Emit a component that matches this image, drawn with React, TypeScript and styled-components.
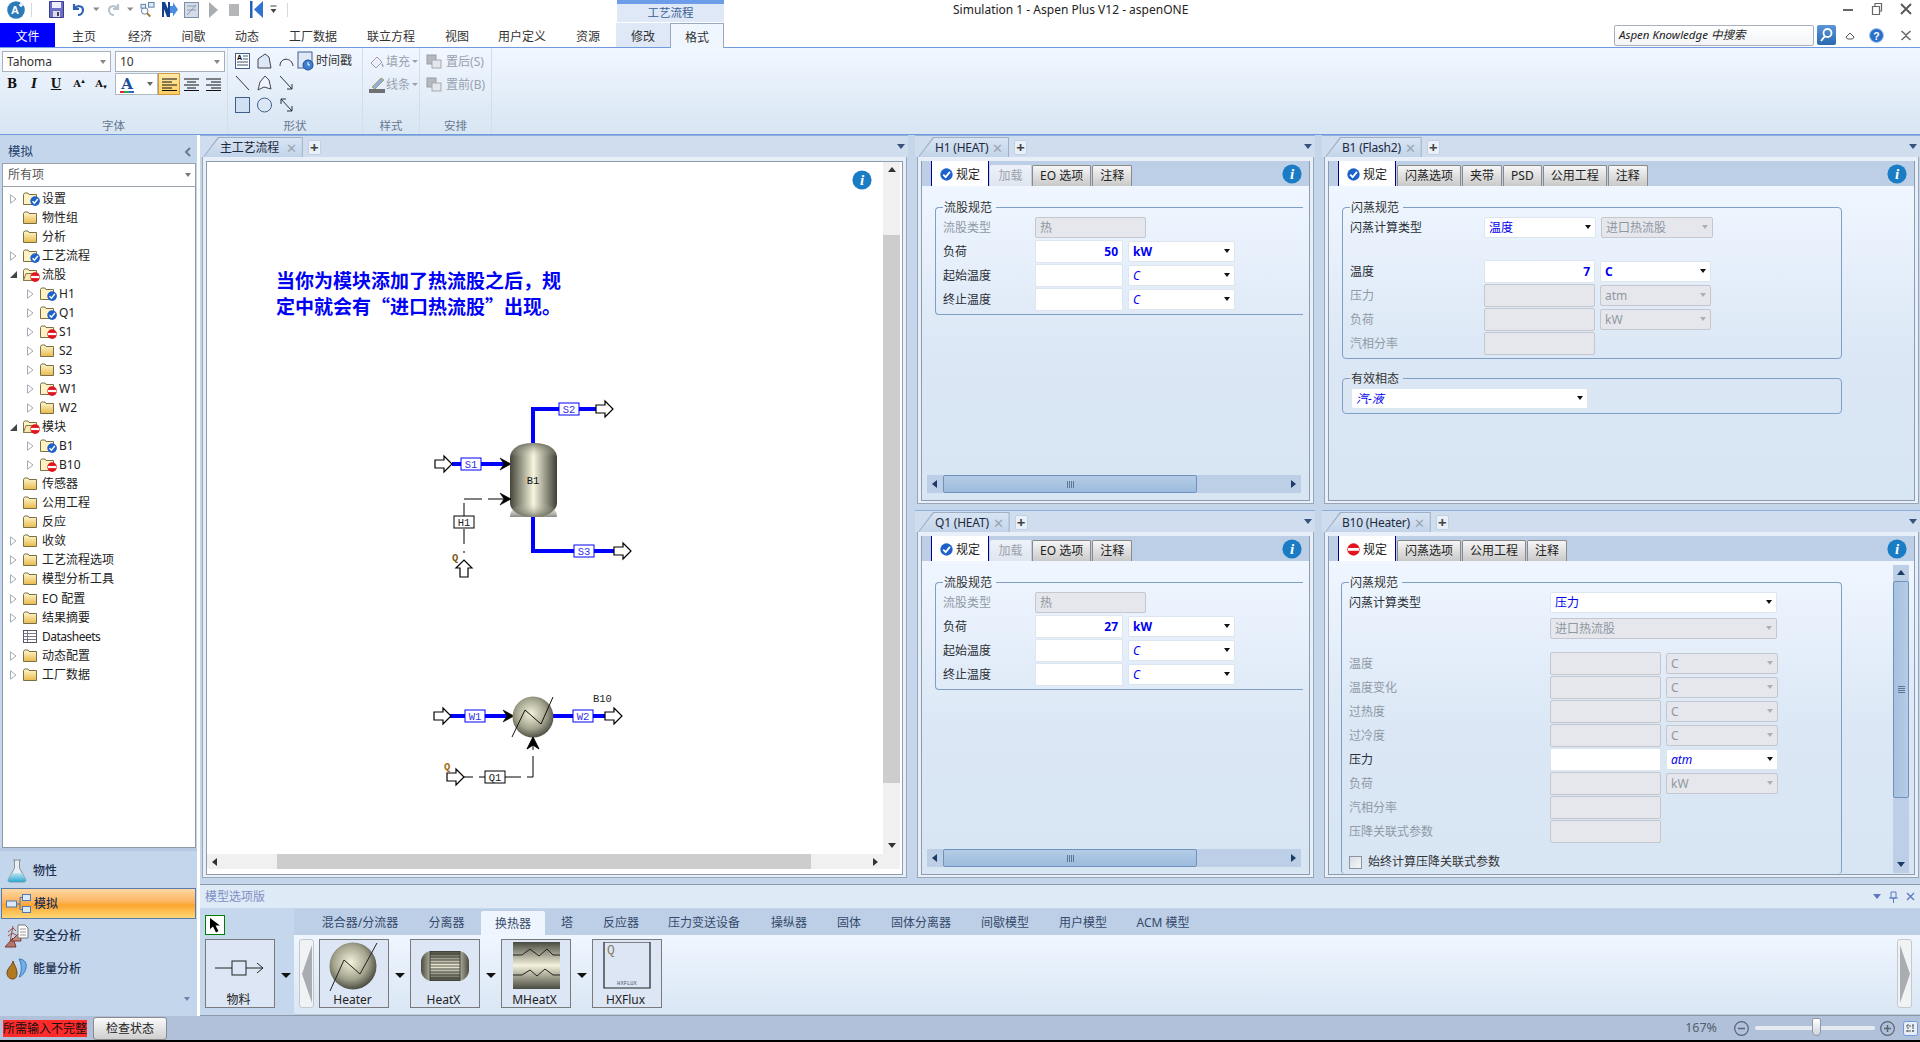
import React from 'react';
import styled, { createGlobalStyle } from 'styled-components';

const Global = createGlobalStyle`
  html, body { margin: 0; padding: 0; background: #000; }
  * { box-sizing: border-box; }
  body { font-family: "Noto Sans", "Noto Sans CJK SC", sans-serif; font-size: 12px; line-height: 16px; color: #1d2a3a; }
`;

const App_ = styled.div`width: 1920px; height: 1042px; display: flex; flex-direction: column; overflow: hidden; background: #000;`;

/* ---------- title bar ---------- */
const TitleBar = styled.div`height: 23px; background: #fff; display: flex; flex: none;`;
const Quick = styled.div`width: 617px; display: flex; align-items: center; position: relative; padding-bottom: 4px;`;
const QuickCell = styled.div<{ $w: number }>`width: ${p => p.$w}px; flex: none; display: flex; justify-content: center; align-items: center;`;
const Sep = styled.div`width: 1px; height: 14px; background: #d8d8d8;`;
const CtxTab = styled.div`width: 107px; height: 22px; background: #dfe8f7; border-top: 4px solid #6d9de8; text-align: center; line-height: 18px; color: #3a5f96; font-size: 11.5px;`;
const WinTitle = styled.div`padding-left: 229px; line-height: 19px; color: #222; font-size: 12px; white-space: nowrap;`;
const WinBtns = styled.div`margin-left: auto; display: flex; align-items: flex-start; padding-top: 2px;`;
const WinBtn = styled.div`width: 29px; display: flex; justify-content: center;`;

/* ---------- ribbon tabs ---------- */
const TabRow = styled.div`height: 24px; background: #fff; display: flex; flex: none; position: relative;`;
const RTab = styled.div<{ $w: number; $kind?: string }>`
  width: ${p => p.$w}px; height: ${p => p.$kind === 'on' ? 25 : 24}px; text-align: center; line-height: 27px; color: ${p => p.$kind === 'file' ? '#fff' : '#333'};
  font-size: 12px; z-index: 1;
  background: ${p => p.$kind === 'file' ? '#0000ff' : p.$kind === 'ctx' ? '#dfe8f7' : p.$kind === 'on' ? '#f0f6fe' : 'transparent'};
  border: ${p => p.$kind === 'on' ? '1px solid #98a8c0' : 'none'};
  border-bottom: none;
`;
const SearchWrap = styled.div`position: absolute; right: 0; top: 0; display: flex; align-items: center; height: 23px; padding-top: 1px;`;
const SearchBox = styled.div`width: 200px; height: 21px; border: 1px solid #a8b0bc; border-radius: 2px; font-style: italic; color: #222; padding-left: 4px; line-height: 18px; font-size: 11.5px; background: linear-gradient(#fff, #f2f4f7);`;
const SearchBtn = styled.div`width: 19px; height: 20px; margin-left: 3px; background: linear-gradient(#5a96d8, #2a68b0); border-radius: 2px; display: flex; justify-content: center; align-items: center;`;
const SearchIcon = styled.div<{ $w: number }>`width: ${p => p.$w}px; flex: none; display: flex; justify-content: center;`;

/* ---------- ribbon ---------- */
const Ribbon = styled.div`height: 88px; flex: none; display: flex; background: linear-gradient(#f1f7ff, #d8e5f3); border-top: 1px solid #6f9ade; border-bottom: 1px solid #6f9ade;`;
const RGroup = styled.div<{ $w: number; $pt?: number }>`width: ${p => p.$w}px; position: relative; border-right: 1px solid #d2deec; padding-top: ${p => p.$pt ?? 3}px;`;
const RLabel = styled.div`position: absolute; left: 0; right: 0; bottom: 1px; text-align: center; color: #66788f; font-size: 11.5px; line-height: 14px;`;
const FontRow = styled.div`display: flex; padding-left: 2px; gap: 4px; height: 22px;`;
const RSelect = styled.div<{ $w: number }>`width: ${p => p.$w}px; height: 21px; background: #fff; border: 1px solid #aab0b8; padding-left: 4px; line-height: 19px; position: relative; color: #333; font-size: 12px;`;
const Caret = styled.i<{ $c?: string }>`position: absolute; right: 4px; top: 50%; margin-top: -2px; border: 3.5px solid transparent; border-top: 4px solid ${p => p.$c || '#555'}; border-bottom: none;`;
const FmtRow = styled.div`display: flex; height: 22px; align-items: center;`;
const FmtBtn = styled.div<{ $w: number; $on?: boolean }>`
  width: ${p => p.$w}px; height: 22px; flex: none; display: flex; justify-content: center; align-items: center; font-family: "DejaVu Serif", serif; font-weight: bold; color: #111; font-size: 12px;
  ${p => p.$on ? 'background: linear-gradient(#ffe9a8,#ffcf60); border: 1px solid #d29a3c;' : ''}
`;
const Raise = styled.span<{ $low?: boolean }>`font-size: 7px; margin-top: ${p => p.$low ? 6 : -6}px;`;
const SmallA = styled.span`font-size: 10px;`;
const ColorBtn = styled.div`width: 43px; height: 22px; flex: none; background: #fff; border: 1px solid #b0b8c2; position: relative; display: flex; align-items: center; padding-left: 1px; margin-left: 3px;`;
const ShapeGrid = styled.div`display: grid; grid-template-columns: repeat(3, 22px) auto; grid-auto-rows: 22px; padding: 0 0 0 3px; align-items: center; justify-items: center;`;
const Stamp = styled.div`display: flex; align-items: center; gap: 2px; color: #333; font-size: 12px; white-space: nowrap; justify-self: start;`;
const OffLine = styled.div`display: flex; align-items: center; height: 23px; color: #98a2ae; font-size: 12px; padding-left: 6px; gap: 1px; white-space: nowrap;`;
const TinyCaret = styled.i`border: 3px solid transparent; border-top: 3px solid #98a2ae; border-bottom: none; margin-left: 1px;`;

/* ---------- main ---------- */
const Main = styled.div`height: 881px; flex: none; display: flex; background: #c5d6ea;`;
const LeftCol = styled.div`width: 200px; flex: none; border-right: 3px solid #fff; display: flex; flex-direction: column; background: #c4d6ec;`;
const LeftHead = styled.div`height: 28px; display: flex; align-items: center; justify-content: space-between; padding: 5px 5px 0 8px; color: #1f3d68; font-size: 12.5px;`;
const FilterSel = styled.div`margin: 0 1px 0 2px; height: 24px; border: 1px solid #9aa3ad; background: #fff; padding-left: 5px; line-height: 21px; position: relative; color: #555;`;
const Tree = styled.div`height: 661px; margin: 0 1px 0 2px; border: 1px solid #8e99a6; border-top: none; background: #fff; padding-top: 2px;`;
const TreeRow = styled.div<{ $lv: number }>`height: 19.05px; display: flex; align-items: center; padding-left: ${p => 3 + p.$lv * 17}px; color: #222; font-size: 12px; white-space: nowrap;`;
const ExpCell = styled.div`width: 14px; flex: none; display: flex; justify-content: center;`;
const TreeIcon = styled.div`width: 22px; padding-left: 3px; flex: none; display: flex; align-items: center;`;
const LatinName = styled.span`letter-spacing: -0.5px;`;
const NavArea = styled.div`flex: 1; padding-top: 3px; position: relative; border-top: 3px solid #b6c9e2;`;
const NavItem = styled.div<{ $on?: boolean }>`
  height: ${p => p.$on ? 31 : 33}px; margin: ${p => p.$on ? 1 : 0}px 1px 0; display: flex; align-items: center; padding-left: 3px; gap: 3px; color: #1d3050; font-size: 12px; font-weight: 500;
  ${p => p.$on ? 'background: linear-gradient(#fdd9a6 0%, #fdb35c 45%, #fda52e 55%, #ffd878 100%); border: 1px solid #5a7aa8;' : ''}
`;
const NavIcon = styled.div`width: 26px; display: flex; justify-content: center;`;
const NavMore = styled.i`position: absolute; right: 7px; bottom: 15px; border: 3.5px solid transparent; border-top: 4px solid #6b86ad; border-bottom: none;`;

const RightCol = styled.div`flex: 1; min-width: 0; display: flex; flex-direction: column;`;
const Workspace = styled.div`height: 749px; flex: none; display: grid; grid-template-columns: 708px 400px 598px; column-gap: 7px; grid-template-rows: 369px 368px; row-gap: 6px; background: #c5d6ea;`;
const DocCell = styled.div`grid-row: 1 / span 2; display: flex; flex-direction: column; min-height: 0;`;
const PanelCell = styled.div`display: flex; flex-direction: column; min-height: 0;`;

const Strip = styled.div`height: 22px; flex: none; display: flex; background: #cfddef; padding-left: 3px; align-items: flex-end; border-top: 1px solid #8fb0de; position: relative; z-index: 1; margin-bottom: -1px;`;
const DocTab = styled.div<{ $gap?: number }>`position: relative; height: 20px; display: flex; align-items: center; padding: 2px 6px 0 17px; gap: ${p => p.$gap ?? 4}px; color: #1c2a3c; font-size: 12px; letter-spacing: -0.2px; white-space: nowrap; z-index: 0;
  &::before, &::after { content: ''; position: absolute; inset: 0; z-index: -1; clip-path: polygon(0 100%, 15px 0, 100% 0, 100% 100%); }
  &::before { background: #9fb0c4; }
  &::after { inset: 1px 1px 0 1px; background: linear-gradient(#d8e4f3, #c3d4ea); }
`;
const Close = styled.span`color: #9aa5b2; font-size: 13px; line-height: 14px;`;
const Plus = styled.div`width: 13px; height: 15px; margin: 0 0 2px 5px; background: #e8f0fa; border: 1px solid #c3d0e0; border-radius: 2px; color: #444; line-height: 12px; text-align: center; font-size: 15px; font-weight: bold;`;
const StripCaret = styled.i`position: absolute; right: 3px; top: 8px; border: 4px solid transparent; border-top: 5px solid #35527d; border-bottom: none;`;
const Frame = styled.div`flex: 1; min-height: 0; margin: 0 1px 0 2px; border: 1px solid #97a6b8; background: #e8eff8; padding: 4px 3px 2px 3px; display: flex; flex-direction: column;`;
const Inner = styled.div`flex: 1; min-height: 0; border: 1px solid #8d9caf; border-top: none; display: flex; flex-direction: column; overflow: hidden; position: relative;`;
const SubTabs = styled.div`height: 25px; flex: none; background: #bccfe6; display: flex; align-items: flex-end; padding-left: 9px; gap: 1px; position: relative;`;
const SubTab = styled.div<{ $kind?: string }>`
  padding: 0 7px; display: flex; align-items: center; justify-content: center; gap: 3px; white-space: nowrap; font-size: 12px;
  ${p => p.$kind === 'on' ? 'height: 25px; padding-top: 2px; background: #fff; border-left: 1px solid #00008b; border-right: 1px solid #00008b; color: #222; min-width: 58px;'
    : p.$kind === 'off' ? 'height: 21px; background: linear-gradient(#eef2f8,#dfe6ef); color: #9aa3ad; min-width: 41px; border-top-left-radius: 2px;'
    : 'height: 21px; background: linear-gradient(#f6f6f6,#c9c9c9); border: 1px solid #8a8a8a; border-bottom: none; border-radius: 2px 2px 0 0; color: #222;'}
`;
const InfoSpot = styled.div`position: absolute; right: 7px; top: 3px;`;
const Content = styled.div`flex: 1; min-height: 0; background: linear-gradient(#eff6ff, #dbe7f5 55%, #d8e5f3); display: flex; overflow: hidden;`;
const FormCol = styled.div`flex: 1; min-width: 0; display: flex; flex-direction: column;`;
const Box = styled.fieldset<{ $w: number; $m: number; $t: number; $open?: boolean; $noBottom?: boolean }>`
  width: ${p => p.$w}px; margin: ${p => p.$t}px 0 0 ${p => p.$m}px; padding: 0 0 3px 7px; min-width: 0; flex: none;
  border: 1px solid #7f9fc6; border-radius: 4px;
  ${p => p.$open ? 'border-right: none; border-top-right-radius: 0; border-bottom-right-radius: 0;' : ''}
  ${p => p.$noBottom ? 'border-bottom: none; padding-bottom: 0;' : ''}
`;
const Legend = styled.legend`padding: 1px 4px 0 1px; margin-left: 0; line-height: 15px; color: #333; font-size: 12px;`;
const Row = styled.div<{ $mt?: number }>`height: 24px; display: flex; align-items: center; margin-top: ${p => p.$mt || 0}px;`;
const Label = styled.div<{ $w: number; $off?: boolean }>`width: ${p => p.$w}px; flex: none; padding-top: 2px; color: ${p => p.$off ? '#909aa5' : '#2a2f36'}; white-space: nowrap; font-size: 12px;`;
const Inp = styled.div<{ $w: number; $off?: boolean; $h?: number }>`
  width: ${p => p.$w}px; height: ${p => p.$h || 23}px; flex: none; text-align: right; padding-right: 4px; line-height: 22px;
  font-weight: bold; color: #0000f0; font-size: 12px;
  background: ${p => p.$off ? '#e6e7ec' : '#fff'}; border: 1px solid ${p => p.$off ? '#c4c8ce' : '#dde5ef'}; border-radius: 2px;
`;
const Sel = styled.div<{ $w: number; $off?: boolean; $ml?: number; $style?: string; $h?: number }>`
  width: ${p => p.$w}px; height: ${p => p.$h || 21}px; flex: none; margin-left: ${p => p.$ml ?? 5}px; padding-left: 4px; line-height: 20px; position: relative; font-size: 12px; white-space: nowrap;
  color: ${p => p.$off ? '#8e97a2' : '#0000f0'}; font-weight: ${p => p.$style === 'bold' ? 'bold' : 'normal'}; font-style: ${p => p.$style === 'italic' ? 'italic' : 'normal'};
  background: ${p => p.$off ? '#e6e7ec' : '#fff'}; border: 1px solid ${p => p.$off ? '#c4c8ce' : '#dde5ef'}; border-radius: 2px;
`;
const HScroll = styled.div`height: 18px; flex: none; margin: auto 8px 7px 5px; display: flex; align-items: center; background: #bccfe6;`;
const ScrollEnd = styled.div`width: 16px; flex: none; display: flex; justify-content: center; align-items: center;`;
const HTrack = styled.div`flex: 1; height: 100%; display: flex;`;
const HThumb = styled.div`width: 254px; height: 100%; background: linear-gradient(#b4cce6, #9dbbdd); border: 1px solid #6f92bd; border-radius: 2px; display: flex; justify-content: center; align-items: center;`;
const Grip = styled.div`width: 7px; height: 7px; background: repeating-linear-gradient(90deg, #5c7696 0 1px, transparent 1px 2px);`;
const VScroll = styled.div`width: 16px; flex: none; margin: 4px 5px 1px 0; background: #bccfe6; display: flex; flex-direction: column;`;
const VThumb = styled.div`height: 217px; background: linear-gradient(90deg, #a6c1e0, #b7cce6); border: 1px solid #6f92bd; border-radius: 2px; display: flex; justify-content: center; align-items: center;`;
const VGrip = styled.div`width: 7px; height: 7px; background: repeating-linear-gradient(0deg, #5c7696 0 1px, transparent 1px 2px);`;
const CheckRow = styled.div`display: flex; align-items: center; gap: 6px; margin-top: 7px; height: 24px; color: #333; white-space: nowrap;`;
const CheckBox = styled.div`width: 13px; height: 13px; border: 1px solid #8a94a0; background: linear-gradient(135deg, #d8dde3, #f6f7f8);`;

/* ---------- document canvas ---------- */
const CanvasGrid = styled.div`flex: 1; min-height: 0; display: grid; grid-template-columns: 676px 17px; grid-template-rows: 692px 15px; background: #fff; border: 1px solid #8d9caf;`;
const Viewport = styled.div`position: relative; overflow: hidden; background: #fff;`;
const FlowSvg = styled.svg`position: absolute; inset: 0; display: block;`;
const Note = styled.div`position: absolute; left: 69px; top: 105px; width: 320px; font-family: "Noto Sans CJK SC", sans-serif; font-size: 19px; line-height: 26px; font-weight: bold; color: #0000f5; white-space: nowrap;`;
const NoteLine = styled.div``;
const DocInfo = styled.div`position: absolute; left: 645px; top: 8px;`;
const CV = styled.div`background: #f0f0f0; display: flex; flex-direction: column; align-items: stretch;`;
const CH = styled.div`background: #f0f0f0; display: flex; align-items: stretch;`;
const CArrow = styled.div<{ $end?: boolean }>`height: 16px; display: flex; justify-content: center; align-items: center; flex: none; ${p => p.$end ? 'margin-top: auto;' : ''}`;
const CArrowH = styled.div<{ $end?: boolean }>`width: 16px; display: flex; justify-content: center; align-items: center; flex: none; ${p => p.$end ? 'margin-left: auto;' : ''}`;
const CThumbV = styled.div`height: 548px; margin-top: 57px; background: #cdcdcd;`;
const CThumbH = styled.div`width: 534px; margin-left: 54px; background: #cdcdcd;`;
const CCorner = styled.div`background: #f0f0f0;`;

/* ---------- palette ---------- */
const Palette = styled.div`flex: 1; min-height: 0; display: flex; flex-direction: column; border-top: 1px solid #8c98a8; border-bottom: 1px solid #8c98a8; background: #c5d7ec;`;
const PalHead = styled.div`height: 23px; flex: none; background: #deeaf6; padding-left: 5px; line-height: 22px; color: #7f8fc4; font-size: 12px; display: flex; align-items: center;`;
const PalTools = styled.div`margin-left: auto; display: flex; align-items: center; gap: 8px; padding-right: 5px;`;
const PalBody = styled.div`flex: 1; display: flex; min-height: 0;`;
const PalLeft = styled.div`width: 94px; flex: none; padding: 7px 0 0 5px;`;
const Cursor = styled.div`width: 20px; height: 20px; border: 1px solid #008000; background: #fff; display: flex; justify-content: center; align-items: center;`;
const PalLeftRow = styled.div`display: flex; align-items: center; margin-top: 4px;`;
const PalRight = styled.div`flex: 1; min-width: 0; display: flex; flex-direction: column; padding-top: 1px;`;
const PalTabs = styled.div`height: 26px; flex: none; background: #bccfe6; display: flex; align-items: flex-end; padding-left: 14px;`;
const PalTab = styled.div<{ $w: number; $on?: boolean }>`width: ${p => p.$w}px; flex: none; text-align: center; height: ${p => p.$on ? 24 : 26}px; line-height: ${p => p.$on ? 26 : 28}px; color: #36496a; font-size: 12px; white-space: nowrap; ${p => p.$on ? 'background: #eef5fe; border-radius: 2px 2px 0 0;' : ''}`;
const PalContent = styled.div`flex: 1; display: flex; align-items: flex-start; padding: 4px 8px 0 5px; background: linear-gradient(#eff6ff, #d9e6f4); border-bottom: 1px solid #bccbdc;`;
const Scroller = styled.div`width: 15px; height: 69px; flex: none; background: #f1f2f4; border: 1px solid #c2c8d0; border-radius: 3px; display: flex; align-items: center; justify-content: center;`;
const ModelBtn = styled.div`width: 70px; height: 69px; flex: none; border: 1px solid #7a7a7a; background: #dde6f5; display: flex; flex-direction: column; align-items: center; justify-content: space-between; color: #222; font-size: 12px; line-height: 15px; padding: 2px 3px 0 0;`;
const ModelIcon = styled.div<{ $t?: number }>`display: flex; height: 50px; padding-top: ${p => p.$t || 0}px; padding-left: 3px;`;
const ModelWrap = styled.div`display: flex; align-items: center; height: 69px;`;
const DropCell = styled.div`width: 21px; display: flex; justify-content: center; flex: none;`;
const DropTri = styled.i`border: 5px solid transparent; border-top: 5px solid #111; border-bottom: none; margin-top: 3px;`;
const ScrollRightSpot = styled.div`margin-left: auto;`;

/* ---------- status ---------- */
const Status = styled.div`height: 24px; flex: none; background: #b0c1d9; display: flex; align-items: center; padding-left: 3px;`;
const Alarm = styled.div`width: 84px; height: 17px; background: #ff2a2a; color: #111; line-height: 17px; text-align: center; font-size: 12px; white-space: nowrap;`;
const StatusBtn = styled.div`width: 74px; height: 23px; margin-left: 6px; background: linear-gradient(#fafafa, #cfcfcf); border: 1px solid #8a8a8a; border-radius: 3px; text-align: center; line-height: 21px; color: #222; font-size: 12px;`;
const Zoomer = styled.div`margin-left: auto; display: flex; align-items: center; color: #55606e; font-size: 12.5px; padding-right: 2px;`;
const Slider = styled.div`width: 120px; height: 4px; margin: 0 5px 0 6px; background: #e6ebf2; border-radius: 2px; position: relative;`;
const Thumb = styled.div`position: absolute; left: 57px; top: -8px; width: 9px; height: 18px; background: linear-gradient(#fff, #cfd5dd); border: 1px solid #8e98a6; border-radius: 2px 2px 4px 4px;`;
const ZoomIco = styled.div<{ $ml?: number }>`margin-left: ${p => p.$ml || 0}px; display: flex;`;
const Black = styled.div`flex: 1;`;

/* ---------- icons ---------- */
const CheckBadge = ({ s = 13 }: { s?: number }) => (
  <svg width={s} height={s} viewBox="0 0 12 12"><circle cx="6" cy="6" r="5.7" fill="#1d62c8" /><path d="M3 6.2 5.2 8.4 9.2 3.6" stroke="#fff" strokeWidth="1.7" fill="none" /></svg>
);
const StopBadge = ({ s = 13 }: { s?: number }) => (
  <svg width={s} height={s} viewBox="0 0 12 12"><circle cx="6" cy="6" r="5.7" fill="#e0141c" /><rect x="1" y="4.6" width="10" height="2.6" fill="#fff" /></svg>
);
const Info = () => (
  <svg width="20" height="20" viewBox="0 0 20 20"><circle cx="10" cy="10" r="9.6" fill="#1a7cc4" /><text x="10" y="15" textAnchor="middle" fontFamily="Liberation Serif, serif" fontStyle="italic" fontWeight="bold" fontSize="15" fill="#fff">i</text></svg>
);
const Folder = ({ st, open }: { st?: string; open?: boolean }) => (
  <svg width="17" height="14" viewBox="0 0 17 14">
    <defs><linearGradient id="fg" x1="0" y1="0" x2="0" y2="1"><stop offset="0" stopColor="#fff8d0" /><stop offset="1" stopColor="#e9b94c" /></linearGradient></defs>
    <path d="M.5 2.500 1.500 1H5L6 2.500h7.500V12.500H.5Z" fill={st ? '#fff3c4' : 'url(#fg)'} stroke="#7a7048" />
    {open && <path d="M.5 12.500 3 5.500H15L13 12.500Z" fill="#fbe9ac" stroke="#8a7a4a" />}
    {st === 'ok' && <g transform="translate(7 4) scale(.85)"><circle cx="6" cy="6" r="5.7" fill="#1d62c8" /><path d="M3 6.200 5.200 8.400 9.200 3.600" stroke="#fff" strokeWidth="1.700" fill="none" /></g>}
    {st === 'err' && <g transform="translate(7 4) scale(.85)"><circle cx="6" cy="6" r="5.700" fill="#e0141c" /><rect x="1" y="4.600" width="10" height="2.600" fill="#fff" /></g>}
  </svg>
);
const ExpClosed = () => <svg width="7" height="10" viewBox="0 0 7 10"><path d="M.5.8 6 5 .5 9.200Z" fill="#fff" stroke="#a4acb5" /></svg>;
const ExpOpen = () => <svg width="9" height="9" viewBox="0 0 9 9"><path d="M8 1V8H1Z" fill="#444" /></svg>;
const Sheet = () => <svg width="14" height="13" viewBox="0 0 14 13"><rect x=".5" y=".5" width="13" height="12" fill="#fff" stroke="#556" /><path d="M.5 3.500H13.500M.5 6.500H13.500M.5 9.500H13.500M4.500.5V12.500" stroke="#778" /></svg>;
const Tri = ({ d, c = '#333' }: { d: 'u' | 'd' | 'l' | 'r'; c?: string }) => {
  const p = { u: 'M0 6 4 1 8 6Z', d: 'M0 1H8L4 6Z', l: 'M6 0V8L1 4Z', r: 'M2 0V8L7 4Z' }[d];
  return <svg width="8" height="8" viewBox="0 0 8 8"><path d={p} fill={c} /></svg>;
};

const SaveIco = () => <svg width="15" height="17" viewBox="0 0 15 17"><path d="M.5.5H14.500V16.500H.5Z" fill="#6f6fc4" stroke="#3a3a90" /><rect x="3" y="1" width="9" height="6" fill="#eef" /><rect x="4" y="10" width="7" height="6" fill="#dde" /><rect x="8" y="11" width="2" height="4" fill="#446" /></svg>;
const UndoIco = ({ off }: { off?: boolean }) => <svg width="13" height="15" viewBox="0 0 13 15"><g transform={off ? 'translate(13 0) scale(-1 1)' : undefined}><path d="M2 2V7H7M2.500 6.500C5 3 11 3.500 11 8 11 11 8.500 13 6 13" fill="none" stroke={off ? '#b8c2cc' : '#2e62b4'} strokeWidth="2.200" /></g></svg>;
const Drop = () => <svg width="7" height="5" viewBox="0 0 7 5"><path d="M0 .5H6.500L3.200 4Z" fill="#8a8a8a" /></svg>;
const ToolsIco = () => <svg width="16" height="17" viewBox="0 0 16 17"><circle cx="5" cy="10" r="3.500" fill="#fff" stroke="#5a7ca8" /><path d="M7.500 12.500 11 16" stroke="#a07a30" strokeWidth="2" /><rect x="9" y="1" width="6" height="5" fill="#dbe8f8" stroke="#5a7ca8" /><rect x="1" y="3" width="5" height="4" fill="#dbe8f8" stroke="#5a7ca8" /></svg>;
const RunN = () => <svg width="17" height="17" viewBox="0 0 17 17"><path d="M1 1H4L7 8V1H9V16H6L3 8V16H1Z" fill="#14408e" /><path d="M9 5H12V1.500L17 8.500 12 15.500V12H9Z" fill="#4a8ee0" /></svg>;
const GridIco = () => <svg width="15" height="16" viewBox="0 0 15 16"><rect x=".5" y=".5" width="14" height="15" fill="#d4dce8" stroke="#7f8ea8" /><path d="M3 13 12 3M3 4H12M3 8H12" stroke="#8a9ab4" /></svg>;
const PlayIco = () => <svg width="9" height="16" viewBox="0 0 9 16"><path d="M0 0 9 8 0 16Z" fill="#a9adb2" /></svg>;
const StopIco = () => <svg width="10" height="12" viewBox="0 0 10 12"><rect width="10" height="12" fill="#b4b6ba" /></svg>;
const RewindIco = () => <svg width="13" height="17" viewBox="0 0 13 17"><rect width="2.500" height="17" fill="#2560b8" /><path d="M13 0V17L4 8.500Z" fill="#2f74d0" /></svg>;
const MiniDrop = () => <svg width="7" height="9" viewBox="0 0 7 9"><path d="M.5 1H6.500" stroke="#444" /><path d="M.5 4H6.500L3.500 8Z" fill="#444" /></svg>;
const Logo = () => <svg width="18" height="20" viewBox="0 0 18 20"><circle cx="9" cy="10" r="8.800" fill="#2d7ab8" /><text x="4" y="14" fontFamily="Liberation Sans, sans-serif" fontWeight="bold" fontSize="11" fill="#fff">A</text><path d="M12 5H16M14 3V7" stroke="#fff" strokeWidth="1.500" /></svg>;

const Tb = ({ children, w = 15, h = 16 }: { children: React.ReactNode; w?: number; h?: number }) => <svg width={w} height={h} viewBox={`0 0 ${w} ${h}`}>{children}</svg>;
const I = {
  textBox: <Tb><rect x=".5" y=".5" width="14" height="15" fill="#fff" stroke="#3f5f8a" /><text x="2" y="7" fontSize="7" fontWeight="bold" fontFamily="Liberation Sans">A</text><path d="M8 3H13M8 6H13M2 9H13M2 12H13" stroke="#456" /></Tb>,
  poly: <Tb><path d="M1 15V6L8 1 12 4 14 15Z" fill="#dde8f6" stroke="#445" /></Tb>,
  arc: <Tb><path d="M1 13C1 4 13 4 14 13" fill="none" stroke="#334" strokeWidth="1" /></Tb>,
  line: <Tb><path d="M1 1 14 15" stroke="#334" /></Tb>,
  poly2: <Tb><path d="M1 15 3 7 8 1 12 5 14 14 7 12Z" fill="#eef4fb" stroke="#445" /></Tb>,
  arrow: <Tb><path d="M1 1 13 14M13 14H8M13 14V9" stroke="#234" fill="none" /></Tb>,
  rect: <Tb><rect x=".5" y=".5" width="14" height="15" fill="#cfe0f3" stroke="#3f5f8a" /></Tb>,
  ell: <Tb><ellipse cx="7.500" cy="8" rx="7" ry="7" fill="#dbe7f4" stroke="#3f5f8a" /></Tb>,
  dbl: <Tb><path d="M2 2 13 14M2 2H7M2 2V7M13 14H8M13 14V9" stroke="#234" fill="none" /></Tb>,
  stamp: <Tb w={17} h={20}><rect x="1" y="1" width="14" height="16" fill="#dfe9f6" stroke="#3f5f8a" /><circle cx="11" cy="14" r="5" fill="#3d7fd0" stroke="#1d4f92" /><path d="M11 11V14H13" stroke="#fff" fill="none" /></Tb>,
  fill: <Tb w={16} h={14}><path d="M2 8 8 2 13 7 7 13Z" fill="#eef" stroke="#9aa2ac" /><path d="M13 8C15 10 15 12 14 12S12 10 13 8Z" fill="#9ab" /></Tb>,
  pen: <Tb w={16} h={16}><path d="M3 10 12 1 15 3 6 12Z" fill="#8fb0dc" stroke="#a8a070" /><rect y="12" width="16" height="4" fill="#6f7074" /></Tb>,
  back: <Tb w={16} h={15}><rect x="1" y="1" width="9" height="9" fill="#b5b8bc" stroke="#9a9da2" /><rect x="6" y="6" width="9" height="8" fill="#e3e6ea" stroke="#a6a9ae" /></Tb>,
};

/* ---------- flowsheet ---------- */
const PortR = ({ x, y }: { x: number; y: number }) => <polygon points={`${x},${y - 4} ${x + 9},${y - 4} ${x + 9},${y - 8} ${x + 17},${y} ${x + 9},${y + 8} ${x + 9},${y + 4} ${x},${y + 4}`} fill="#fff" stroke="#000" strokeWidth="1.200" />;
const PortU = ({ x, y }: { x: number; y: number }) => <polygon points={`${x - 4},${y} ${x - 4},${y - 9} ${x - 8},${y - 9} ${x},${y - 17} ${x + 8},${y - 9} ${x + 4},${y - 9} ${x + 4},${y}`} fill="#fff" stroke="#000" strokeWidth="1.200" />;
const Tag = ({ x, y, t, blue }: { x: number; y: number; t: string; blue?: boolean }) => (
  <g>
    <rect x={x} y={y - 6} width="20" height="12" fill="#fff" stroke={blue ? '#0000ff' : '#000'} />
    <text x={x + 10} y={y + 3.500} textAnchor="middle" fontFamily="Liberation Mono, monospace" fontSize="10.500" fill={blue ? '#3030e8' : '#222'}>{t}</text>
  </g>
);
const HeadR = ({ x, y }: { x: number; y: number }) => <path d={`M${x - 11},${y - 6} L${x},${y} L${x - 11},${y + 6} L${x - 7},${y}Z`} fill="#000" stroke="#000" strokeWidth=".6" />;
const Flowsheet = () => (
  <FlowSvg width="676" height="692" viewBox="207 162 676 692">
    <defs>
      <linearGradient id="ves" x1="0" y1="0" x2="1" y2="0"><stop offset="0" stopColor="#45463a" /><stop offset=".5" stopColor="#f7f5de" /><stop offset="1" stopColor="#3e3f35" /></linearGradient>
      <linearGradient id="capT" x1="0" y1="0" x2="0" y2="1"><stop offset="0" stopColor="#55564a" /><stop offset=".9" stopColor="#cfcdb8" stopOpacity="0" /></linearGradient>
      <radialGradient id="sph" cx=".45" cy=".42" r=".6"><stop offset="0" stopColor="#f4f2dc" /><stop offset=".6" stopColor="#a5a58f" /><stop offset="1" stopColor="#4c4d43" /></radialGradient>
    </defs>
    <g fill="none" stroke="#0000ff" strokeWidth="4">
      <path d="M452 464H506" />
      <path d="M533 446V409H596" />
      <path d="M533 514V551H614" />
      <path d="M450 716H510" />
      <path d="M552 716H605" />
    </g>
    <PortR x={435} y={464} /><PortR x={596} y={409} /><PortR x={614} y={551} />
    <Tag x={461} y={464} t="S1" blue /><Tag x={559} y={409} t="S2" blue /><Tag x={574} y={551} t="S3" blue />
    <HeadR x={511} y={464} />
    <rect x="510" y="443" width="47" height="74" rx="22" ry="14" fill="url(#ves)" />
    <path d="M510 458C510 448 520 443 533 443S557 448 557 458Z" fill="url(#capT)" opacity=".7" />
    <path d="M510 502C510 512 520 517 533 517S557 512 557 502Z" fill="url(#capT)" opacity=".7" transform="rotate(180 533.500 509.500)" />
    <text x="533" y="484" textAnchor="middle" fontFamily="Liberation Mono, monospace" fontSize="10.500" fill="#111">B1</text>
    <g fill="none" stroke="#000" strokeWidth="1">
      <path d="M488 499H506M464 499H482M464 503V517M464 529V544M464 551V553" />
    </g>
    <HeadR x={511} y={499} />
    <Tag x={454} y={522} t="H1" />
    <text x="452" y="561" fontFamily="Liberation Mono, monospace" fontSize="10.500" fill="#7a5a20" fontWeight="bold">Q</text>
    <PortU x={464} y={577} />

    <PortR x={434} y={716} /><PortR x={605} y={716} />
    <Tag x={465} y={716} t="W1" blue /><Tag x={573} y={716} t="W2" blue />
    <HeadR x={514} y={716} />
    <circle cx="533" cy="717" r="20.500" fill="url(#sph)" />
    <path d="M512 737 525 710 541 724 553 697" fill="none" stroke="#111" strokeWidth="1" />
    <text x="593" y="702" fontFamily="Liberation Mono, monospace" fontSize="10.500" fill="#222">B10</text>
    <text x="444" y="770" fontFamily="Liberation Mono, monospace" fontSize="10.500" fill="#a06a10" fontWeight="bold">Q</text>
    <PortR x={447} y={777} />
    <g fill="none" stroke="#000" strokeWidth="1">
      <path d="M464 777H473M479 777H485M505 777H521M527 777H533V756M533 750V742" />
    </g>
    <Tag x={485} y={777} t="Q1" />
    <path d="M527 749 533 737 539 749 533 745Z" fill="#000" stroke="#000" />
  </FlowSvg>
);

/* ---------- model icons ---------- */
const Defs = () => (
  <defs>
    <radialGradient id="msph" cx=".45" cy=".42" r=".6"><stop offset="0" stopColor="#f4f2dc" /><stop offset=".6" stopColor="#a5a58f" /><stop offset="1" stopColor="#46473d" /></radialGradient>
    <linearGradient id="mcap" x1="0" y1="0" x2="1" y2="0"><stop offset="0" stopColor="#4a4b40" /><stop offset=".3" stopColor="#e8e6cf" /><stop offset=".7" stopColor="#e8e6cf" /><stop offset="1" stopColor="#4a4b40" /></linearGradient>
    <linearGradient id="mbar" x1="0" y1="0" x2="0" y2="1"><stop offset="0" stopColor="#4a4b40" /><stop offset=".5" stopColor="#f4f2dc" /><stop offset="1" stopColor="#4a4b40" /></linearGradient>
  </defs>
);
const HeaterIco = () => <svg width="50" height="50" viewBox="0 0 50 50"><Defs /><circle cx="24" cy="24" r="23.500" fill="url(#msph)" /><path d="M1 49 15 18 31 32 48 1" fill="none" stroke="#222" /></svg>;
const HeatXIco = () => (
  <svg width="48" height="30" viewBox="0 3 48 30"><Defs />
    <rect width="48" height="30" y="3" rx="11" fill="url(#mcap)" />
    <rect x="9" y="3" width="30" height="30" fill="url(#mbar)" />
    <path d="M9 6H39M9 9H39M9 12H39M9 15H39M9 18H39M9 21H39M9 24H39M9 27H39M9 30H39M9 3H39M9 33H39M9 3V33M39 3V33" stroke="#2e2f28" strokeWidth=".8" fill="none" />
  </svg>
);
const MHeatXIco = () => (
  <svg width="47" height="47" viewBox="0 0 47 47"><Defs />
    <rect width="47" height="47" fill="url(#mbar)" />
    <path d="M0 13H9L17 7 26 14 34 7 40 13H47M0 33H9L17 28 24 34 32 27 40 33H47" fill="none" stroke="#222" />
  </svg>
);
const HXFluxIco = () => (
  <svg width="48" height="47" viewBox="0 0 48 47">
    <path d="M1 0V46H47V0H1" fill="none" stroke="#222" strokeWidth="1.200" />
    <text x="4" y="12" fontFamily="Liberation Mono, monospace" fontSize="13" fill="#888060">Q</text>
    <text x="24" y="43" textAnchor="middle" fontFamily="Liberation Mono, monospace" fontSize="5.500" fill="#556">HXFLUX</text>
  </svg>
);
const MatIco = () => <svg width="50" height="20" viewBox="0 0 50 20"><path d="M0 10H17M31 10H47M42 5 48 10 42 15" stroke="#222" fill="none" /><rect x="17" y="3" width="14" height="14" fill="#dde6f5" stroke="#222" /></svg>;

/* ---------- nav icons ---------- */
const FlaskI = () => <svg width="20" height="24" viewBox="0 0 20 24"><defs><linearGradient id="fl" x1="0" y1="0" x2="0" y2="1"><stop offset="0" stopColor="#bde6f2" /><stop offset="1" stopColor="#2ea7cf" /></linearGradient></defs><path d="M6 1H14M7.500 1V9L1 21C1 23 3 23 4 23H16C17 23 19 23 19 21L12.500 9V1" fill="#e8eef2" stroke="#8a9096" /><path d="M5 14H15L19 21C19 23 17 23 16 23H4C3 23 1 23 1 21Z" fill="url(#fl)" /></svg>;
const TreeI = () => <svg width="25" height="19" viewBox="0 0 25 19"><g fill="#dbe8f8" stroke="#4c79b4"><rect x=".5" y="7" width="10" height="6" /><rect x="16.500" y=".5" width="8" height="6" /><rect x="16.500" y="12.500" width="8" height="6" /></g><path d="M10.500 10H14V3.500H16.500M14 10V15.500H16.500" fill="none" stroke="#4c79b4" /></svg>;
const SafeI = () => <svg width="26" height="24" viewBox="0 0 26 24"><path d="M1 23 9 14 12 23Z" fill="#b5766c" stroke="#7a3a34" /><path d="M7 17 16 8 17 17Z" fill="#c08a80" stroke="#7a3a34" /><path d="M6 18 9 2M4 8 9 4 12 7M4 12 8 9 12 11" stroke="#9a4a40" fill="none" /><path d="M14 1H21L24 4V14H14Z" fill="#fff" stroke="#777" /><path d="M16 5H22M16 8H22M16 11H22" stroke="#999" /></svg>;
const EnergyI = () => <svg width="22" height="22" viewBox="0 0 22 22"><path d="M7 3C6 8 1 10 1 15 1 19 4 21 7 21 10 21 11 18 11 15 11 10 8 7 7 3Z" fill="#b07a22" stroke="#6f4a14" /><path d="M13 1C19 1 21 6 20 10 19 15 15 19 13 19 16 14 16 6 13 1Z" fill="#6fb0e8" stroke="#3e7ab8" /></svg>;

/* ---------- data ---------- */
type TN = { t: string; l: number; e?: 'c' | 'o'; s?: string; k?: string };
const tree: TN[] = [
  { t: '设置', l: 0, e: 'c', s: 'ok' }, { t: '物性组', l: 0 }, { t: '分析', l: 0 }, { t: '工艺流程', l: 0, e: 'c', s: 'ok' },
  { t: '流股', l: 0, e: 'o', s: 'err' }, { t: 'H1', l: 1, e: 'c', s: 'ok' }, { t: 'Q1', l: 1, e: 'c', s: 'ok' }, { t: 'S1', l: 1, e: 'c', s: 'err' },
  { t: 'S2', l: 1, e: 'c' }, { t: 'S3', l: 1, e: 'c' }, { t: 'W1', l: 1, e: 'c', s: 'err' }, { t: 'W2', l: 1, e: 'c' },
  { t: '模块', l: 0, e: 'o', s: 'err' }, { t: 'B1', l: 1, e: 'c', s: 'ok' }, { t: 'B10', l: 1, e: 'c', s: 'err' }, { t: '传感器', l: 0 }, { t: '公用工程', l: 0 }, { t: '反应', l: 0 },
  { t: '收敛', l: 0, e: 'c' }, { t: '工艺流程选项', l: 0, e: 'c' }, { t: '模型分析工具', l: 0, e: 'c' }, { t: 'EO 配置', l: 0, e: 'c' }, { t: '结果摘要', l: 0, e: 'c' },
  { t: 'Datasheets', l: 0, k: 'sheet' }, { t: '动态配置', l: 0, e: 'c' }, { t: '工厂数据', l: 0, e: 'c' },
];
const rtabs: [string, number, string?][] = [['文件', 55, 'file'], ['主页', 58], ['经济', 54], ['间歇', 53], ['动态', 54], ['工厂数据', 78], ['联立方程', 78], ['视图', 54], ['用户定义', 76], ['资源', 56], ['修改', 54, 'ctx'], ['格式', 54, 'on']];
const palTabs: [string, number, boolean?][] = [['混合器/分流器', 104], ['分离器', 69], ['换热器', 64, true], ['塔', 44], ['反应器', 64], ['压力变送设备', 102], ['操纵器', 68], ['固体', 52], ['固体分离器', 92], ['间歇模型', 76], ['用户模型', 80], ['ACM 模型', 80]];

type SubT = { t: string; k?: string; st?: string };
const Panel = ({ title, tabs, children }: { title: string; tabs: SubT[]; children: React.ReactNode }) => (
  <PanelCell>
    <Strip>
      <DocTab>{title}<Close>✕</Close></DocTab><Plus>+</Plus><StripCaret />
    </Strip>
    <Frame>
      <Inner>
        <SubTabs>
          {tabs.map(s => (
            <SubTab key={s.t} $kind={s.k}>
              {s.st === 'ok' && <CheckBadge />}{s.st === 'err' && <StopBadge />}{s.t}
            </SubTab>
          ))}
          <InfoSpot><Info /></InfoSpot>
        </SubTabs>
        <Content>{children}</Content>
      </Inner>
    </Frame>
  </PanelCell>
);

const Scroll = () => (
  <HScroll>
    <ScrollEnd><Tri d="l" c="#1b3a66" /></ScrollEnd>
    <HTrack><HThumb><Grip /></HThumb></HTrack>
    <ScrollEnd><Tri d="r" c="#1b3a66" /></ScrollEnd>
  </HScroll>
);

const DropSel = ({ w, off, t, style, ml, h }: { w: number; off?: boolean; t: string; style?: string; ml?: number; h?: number }) => (
  <Sel $w={w} $off={off} $style={style} $ml={ml} $h={h}>{t}<Caret $c={off ? '#aab0b8' : '#111'} /></Sel>
);

const HeatForm = ({ duty }: { duty: string }) => (
  <FormCol>
    <Box $w={368} $m={13} $t={13} $open>
      <Legend>流股规范</Legend>
      <Row><Label $w={92} $off>流股类型</Label><Sel $w={111} $off $ml={0}>热</Sel></Row>
      <Row><Label $w={92}>负荷</Label><Inp $w={88}>{duty}</Inp><DropSel w={107} t="kW" style="bold" /></Row>
      <Row><Label $w={92}>起始温度</Label><Inp $w={88} /><DropSel w={107} t="C" style="italic" /></Row>
      <Row><Label $w={92}>终止温度</Label><Inp $w={88} /><DropSel w={107} t="C" style="italic" /></Row>
    </Box>
    <Scroll />
  </FormCol>
);

const heatTabs: SubT[] = [{ t: '规定', k: 'on', st: 'ok' }, { t: '加载', k: 'off' }, { t: 'EO 选项' }, { t: '注释' }];

export default function App() {
  return (
    <App_>
      <Global />
      <TitleBar>
        <Quick>
          <QuickCell $w={31}><Logo /></QuickCell><Sep />
          <QuickCell $w={17} />
          <QuickCell $w={15}><SaveIco /></QuickCell>
          <QuickCell $w={8} />
          <QuickCell $w={13}><UndoIco /></QuickCell>
          <QuickCell $w={22}><Drop /></QuickCell>
          <QuickCell $w={13}><UndoIco off /></QuickCell>
          <QuickCell $w={20}><Drop /></QuickCell>
          <QuickCell $w={15}><ToolsIco /></QuickCell>
          <QuickCell $w={6} />
          <QuickCell $w={17}><RunN /></QuickCell>
          <QuickCell $w={6} />
          <QuickCell $w={15}><GridIco /></QuickCell>
          <QuickCell $w={10} />
          <QuickCell $w={9}><PlayIco /></QuickCell>
          <QuickCell $w={11} />
          <QuickCell $w={10}><StopIco /></QuickCell>
          <QuickCell $w={11} />
          <QuickCell $w={13}><RewindIco /></QuickCell>
          <QuickCell $w={7} />
          <QuickCell $w={7}><MiniDrop /></QuickCell>
          <QuickCell $w={10} /><Sep />
        </Quick>
        <CtxTab>工艺流程</CtxTab>
        <WinTitle>Simulation 1 - Aspen Plus V12 - aspenONE</WinTitle>
        <WinBtns>
          <WinBtn><svg width="12" height="14" viewBox="0 0 12 14"><rect x="1" y="7" width="10" height="2" fill="#666" /></svg></WinBtn>
          <WinBtn><svg width="12" height="14" viewBox="0 0 12 14"><path d="M1.500 4.500H8.500V12.500H1.500ZM4 4V1.500H10.500V9H9" fill="none" stroke="#666" strokeWidth="1.200" /></svg></WinBtn>
          <WinBtn><svg width="12" height="14" viewBox="0 0 12 14"><path d="M1 2 11 12M11 2 1 12" stroke="#555" strokeWidth="1.800" /></svg></WinBtn>
        </WinBtns>
      </TitleBar>
      <TabRow>
        {rtabs.map(([t, w, k]) => <RTab key={t} $w={w} $kind={k}>{t}</RTab>)}
        <SearchWrap>
          <SearchBox>Aspen Knowledge 中搜索</SearchBox>
          <SearchBtn><svg width="13" height="14" viewBox="0 0 13 14"><circle cx="7.500" cy="5" r="4" fill="none" stroke="#fff" strokeWidth="1.800" /><path d="M5 8 1 13" stroke="#fff" strokeWidth="2" /></svg></SearchBtn>
          <SearchIcon $w={28}><svg width="10" height="9" viewBox="0 0 10 9"><path d="M1 6 5 2 9 6 7.500 8H2.500Z" fill="none" stroke="#555" /></svg></SearchIcon>
          <SearchIcon $w={24}><svg width="15" height="15" viewBox="0 0 15 15"><circle cx="7.500" cy="7.500" r="7" fill="#2c6fc8" stroke="#a9cdf2" /><text x="7.500" y="11.500" textAnchor="middle" fontSize="10.500" fontWeight="bold" fill="#fff" fontFamily="Liberation Sans">?</text></svg></SearchIcon>
          <QuickCell $w={4} />
          <SearchIcon $w={28}><svg width="12" height="11" viewBox="0 0 12 11"><path d="M1.500 1 6 5 10.500 1M1.500 10 6 6 10.500 10" fill="none" stroke="#666" strokeWidth="1.500" /></svg></SearchIcon>
        </SearchWrap>
      </TabRow>
      <Ribbon>
        <RGroup $w={228}>
          <FontRow>
            <RSelect $w={109}>Tahoma<Caret $c="#888" /></RSelect>
            <RSelect $w={110}>10<Caret $c="#888" /></RSelect>
          </FontRow>
          <FmtRow>
            <FmtBtn $w={24}>B</FmtBtn>
            <FmtBtn $w={20}><em>I</em></FmtBtn>
            <FmtBtn $w={24}><u>U</u></FmtBtn>
            <FmtBtn $w={22}><SmallA>A</SmallA><Raise>▴</Raise></FmtBtn>
            <FmtBtn $w={22}><SmallA>A</SmallA><Raise $low>▾</Raise></FmtBtn>
            <ColorBtn>
              <svg width="20" height="19" viewBox="0 0 20 19"><text x="10" y="14" textAnchor="middle" fontFamily="DejaVu Serif" fontWeight="bold" fontSize="15" fill="#1b4f9c">A</text><rect x="3" y="16" width="4" height="2" fill="#e23" /><rect x="7" y="16" width="5" height="2" fill="#2a5" /><rect x="12" y="16" width="5" height="2" fill="#36c" /></svg>
              <Caret $c="#666" />
            </ColorBtn>
            <FmtBtn $w={22} $on><svg width="15" height="13" viewBox="0 0 15 13"><path d="M0 1H15M0 4H10M0 7H15M0 10H10M0 12.500H15" stroke="#111" /></svg></FmtBtn>
            <FmtBtn $w={22}><svg width="15" height="13" viewBox="0 0 15 13"><path d="M0 1H15M3 4H12M0 7H15M3 10H12M0 12.500H15" stroke="#111" /></svg></FmtBtn>
            <FmtBtn $w={22}><svg width="15" height="13" viewBox="0 0 15 13"><path d="M0 1H15M5 4H15M0 7H15M5 10H15M0 12.500H15" stroke="#111" /></svg></FmtBtn>
          </FmtRow>
          <RLabel>字体</RLabel>
        </RGroup>
        <RGroup $w={135} $pt={2}>
          <ShapeGrid>
            {I.textBox}{I.poly}{I.arc}<Stamp>{I.stamp}时间戳</Stamp>
            {I.line}{I.poly2}{I.arrow}<span />
            {I.rect}{I.ell}{I.dbl}<span />
          </ShapeGrid>
          <RLabel>形状</RLabel>
        </RGroup>
        <RGroup $w={57} $pt={2}>
          <OffLine>{I.fill}填充<TinyCaret /></OffLine>
          <OffLine>{I.pen}线条<TinyCaret /></OffLine>
          <RLabel>样式</RLabel>
        </RGroup>
        <RGroup $w={72} $pt={2}>
          <OffLine>{I.back}&nbsp;置后(S)</OffLine>
          <OffLine>{I.back}&nbsp;置前(B)</OffLine>
          <RLabel>安排</RLabel>
        </RGroup>
      </Ribbon>
      <Main>
        <LeftCol>
          <LeftHead>模拟<svg width="8" height="10" viewBox="0 0 8 10"><path d="M6 1 2 5 6 9" stroke="#6c7a8c" strokeWidth="2" fill="none" /></svg></LeftHead>
          <FilterSel>所有项<Caret $c="#777" /></FilterSel>
          <Tree>
            {tree.map(n => (
              <TreeRow key={n.t} $lv={n.l}>
                <ExpCell>{n.e === 'c' && <ExpClosed />}{n.e === 'o' && <ExpOpen />}</ExpCell>
                <TreeIcon>{n.k === 'sheet' ? <Sheet /> : <Folder st={n.s} open={n.e === 'o'} />}</TreeIcon>
                {n.k === 'sheet' ? <LatinName>{n.t}</LatinName> : n.t}
              </TreeRow>
            ))}
          </Tree>
          <NavArea>
            <NavItem><NavIcon><FlaskI /></NavIcon>物性</NavItem>
            <NavItem $on><NavIcon><TreeI /></NavIcon>模拟</NavItem>
            <NavItem><NavIcon><SafeI /></NavIcon>安全分析</NavItem>
            <NavItem><NavIcon><EnergyI /></NavIcon>能量分析</NavItem>
            <NavMore />
          </NavArea>
        </LeftCol>
        <RightCol>
          <Workspace>
            <DocCell>
              <Strip><DocTab $gap={7}>主工艺流程<Close>✕</Close></DocTab><Plus>+</Plus><StripCaret /></Strip>
              <Frame>
                <CanvasGrid>
                  <Viewport>
                    <Flowsheet />
                    <Note><NoteLine>当你为模块添加了热流股之后，规</NoteLine><NoteLine>定中就会有“进口热流股”出现。</NoteLine></Note>
                    <DocInfo><Info /></DocInfo>
                  </Viewport>
                  <CV>
                    <CArrow><Tri d="u" /></CArrow>
                    <CThumbV />
                    <CArrow $end><Tri d="d" /></CArrow>
                  </CV>
                  <CH>
                    <CArrowH><Tri d="l" /></CArrowH>
                    <CThumbH />
                    <CArrowH $end><Tri d="r" /></CArrowH>
                  </CH>
                  <CCorner />
                </CanvasGrid>
              </Frame>
            </DocCell>
            <Panel title="H1 (HEAT)" tabs={heatTabs}><HeatForm duty="50" /></Panel>
            <Panel title="B1 (Flash2)" tabs={[{ t: '规定', k: 'on', st: 'ok' }, { t: '闪蒸选项' }, { t: '夹带' }, { t: 'PSD' }, { t: '公用工程' }, { t: '注释' }]}>
              <FormCol>
                <Box $w={500} $m={13} $t={13}>
                  <Legend>闪蒸规范</Legend>
                  <Row><Label $w={134}>闪蒸计算类型</Label><DropSel w={112} t="温度" ml={0} /><DropSel w={112} off t="进口热流股" /></Row>
                  <Row $mt={20}><Label $w={134}>温度</Label><Inp $w={111}>7</Inp><DropSel w={111} t="C" style="bold" /></Row>
                  <Row><Label $w={134} $off>压力</Label><Inp $w={111} $off /><DropSel w={111} off t="atm" /></Row>
                  <Row><Label $w={134} $off>负荷</Label><Inp $w={111} $off /><DropSel w={111} off t="kW" /></Row>
                  <Row><Label $w={134} $off>汽相分率</Label><Inp $w={111} $off /></Row>
                </Box>
                <Box $w={500} $m={13} $t={11}>
                  <Legend>有效相态</Legend>
                  <Row><DropSel w={237} t="汽-液" style="italic" ml={1} /></Row>
                </Box>
              </FormCol>
            </Panel>
            <Panel title="Q1 (HEAT)" tabs={heatTabs}><HeatForm duty="27" /></Panel>
            <Panel title="B10 (Heater)" tabs={[{ t: '规定', k: 'on', st: 'err' }, { t: '闪蒸选项' }, { t: '公用工程' }, { t: '注释' }]}>
              <FormCol>
                <Box $w={501} $m={12} $t={13} $noBottom>
                  <Legend>闪蒸规范</Legend>
                  <Row><Label $w={201}>闪蒸计算类型</Label><DropSel w={227} t="压力" ml={0} /></Row>
                  <Row $mt={2}><Label $w={201} /><DropSel w={227} off t="进口热流股" ml={0} /></Row>
                  <Row $mt={11}><Label $w={201} $off>温度</Label><Inp $w={111} $off /><DropSel w={112} off t="C" /></Row>
                  <Row><Label $w={201} $off>温度变化</Label><Inp $w={111} $off /><DropSel w={112} off t="C" /></Row>
                  <Row><Label $w={201} $off>过热度</Label><Inp $w={111} $off /><DropSel w={112} off t="C" /></Row>
                  <Row><Label $w={201} $off>过冷度</Label><Inp $w={111} $off /><DropSel w={112} off t="C" /></Row>
                  <Row><Label $w={201}>压力</Label><Inp $w={111} /><DropSel w={112} t="atm" style="italic" /></Row>
                  <Row><Label $w={201} $off>负荷</Label><Inp $w={111} $off /><DropSel w={112} off t="kW" /></Row>
                  <Row><Label $w={201} $off>汽相分率</Label><Inp $w={111} $off /></Row>
                  <Row><Label $w={201} $off>压降关联式参数</Label><Inp $w={111} $off /></Row>
                  <CheckRow><CheckBox />始终计算压降关联式参数</CheckRow>
                </Box>
              </FormCol>
              <VScroll>
                <CArrow><Tri d="u" c="#1b3a66" /></CArrow>
                <VThumb><VGrip /></VThumb>
                <CArrow $end><Tri d="d" c="#1b3a66" /></CArrow>
              </VScroll>
            </Panel>
          </Workspace>
          <Palette>
            <PalHead>
              模型选项版
              <PalTools>
                <Tri d="d" c="#5d78c0" />
                <svg width="9" height="12" viewBox="0 0 9 12"><path d="M2 1H7V7H2ZM0 7H9M4.500 7V12" stroke="#5d78c0" fill="none" /></svg>
                <svg width="9" height="9" viewBox="0 0 9 9"><path d="M1 1 8 8M8 1 1 8" stroke="#5d78c0" strokeWidth="1.400" /></svg>
              </PalTools>
            </PalHead>
            <PalBody>
              <PalLeft>
                <Cursor><svg width="13" height="15" viewBox="0 0 13 15"><path d="M1 0V11L4 8.500 7 14.500 9.500 13 6.500 7.500H11Z" fill="#000" /></svg></Cursor>
                <PalLeftRow>
                  <ModelBtn><ModelIcon $t={16}><MatIco /></ModelIcon><span>物料</span></ModelBtn>
                  <DropCell><DropTri /></DropCell>
                </PalLeftRow>
              </PalLeft>
              <PalRight>
                <PalTabs>{palTabs.map(([t, w, on]) => <PalTab key={t} $w={w} $on={on}>{t}</PalTab>)}</PalTabs>
                <PalContent>
                  <Scroller><svg width="10" height="58" viewBox="0 0 10 58"><path d="M10 0V58L0 29Z" fill="#a9adb2" /></svg></Scroller>
                  <ModelWrap>
                    <QuickCell $w={5} />
                    <ModelBtn><ModelIcon><HeaterIco /></ModelIcon><span>Heater</span></ModelBtn><DropCell><DropTri /></DropCell>
                    <ModelBtn><ModelIcon $t={9}><HeatXIco /></ModelIcon><span>HeatX</span></ModelBtn><DropCell><DropTri /></DropCell>
                    <ModelBtn><ModelIcon><MHeatXIco /></ModelIcon><span>MHeatX</span></ModelBtn><DropCell><DropTri /></DropCell>
                    <ModelBtn><ModelIcon><HXFluxIco /></ModelIcon><span>HXFlux</span></ModelBtn>
                  </ModelWrap>
                  <ScrollRightSpot>
                    <Scroller><svg width="10" height="58" viewBox="0 0 10 58"><path d="M0 0V58L10 29Z" fill="#a9adb2" /></svg></Scroller>
                  </ScrollRightSpot>
                </PalContent>
              </PalRight>
            </PalBody>
          </Palette>
        </RightCol>
      </Main>
      <Status>
        <Alarm>所需输入不完整</Alarm>
        <StatusBtn>检查状态</StatusBtn>
        <Zoomer>
          167%
          <ZoomIco $ml={17}><svg width="15" height="15" viewBox="0 0 15 15"><circle cx="7.500" cy="7.500" r="6.800" fill="none" stroke="#5a6472" strokeWidth="1.200" /><path d="M4 7.500H11" stroke="#5a6472" strokeWidth="1.500" /></svg></ZoomIco>
          <Slider><Thumb /></Slider>
          <ZoomIco><svg width="15" height="15" viewBox="0 0 15 15"><circle cx="7.500" cy="7.500" r="6.800" fill="none" stroke="#5a6472" strokeWidth="1.200" /><path d="M4 7.500H11M7.500 4V11" stroke="#5a6472" strokeWidth="1.500" /></svg></ZoomIco>
          <ZoomIco $ml={8}><svg width="15" height="15" viewBox="0 0 15 15"><rect x=".5" y=".5" width="14" height="14" rx="2" fill="#e6eef8" stroke="#6f9ade" /><path d="M3 5H12M3 10H12M5 3V12M10 3V12" stroke="#555" strokeDasharray="2 1" /></svg></ZoomIco>
        </Zoomer>
      </Status>
      <Black />
    </App_>
  );
}
